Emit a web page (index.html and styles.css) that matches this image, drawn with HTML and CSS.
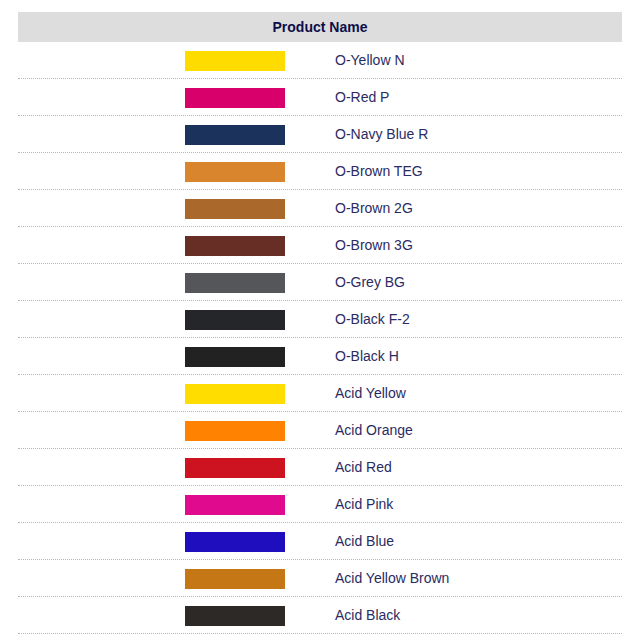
FILE: index.html
```html
<!DOCTYPE html>
<html>
<head>
<meta charset="utf-8">
<link rel="stylesheet" href="styles.css">
</head>
<body>
<div class="wrap">
  <div class="head">Product Name</div>
  <div class="row"><div class="sw-cell"><span class="sw" style="background:#FFDC00"></span></div><div class="name">O-Yellow N</div></div>
  <div class="row"><div class="sw-cell"><span class="sw" style="background:#D8006B"></span></div><div class="name">O-Red P</div></div>
  <div class="row"><div class="sw-cell"><span class="sw" style="background:#1B335C"></span></div><div class="name">O-Navy Blue R</div></div>
  <div class="row"><div class="sw-cell"><span class="sw" style="background:#D9852E"></span></div><div class="name">O-Brown TEG</div></div>
  <div class="row"><div class="sw-cell"><span class="sw" style="background:#AA682A"></span></div><div class="name">O-Brown 2G</div></div>
  <div class="row"><div class="sw-cell"><span class="sw" style="background:#662E24"></span></div><div class="name">O-Brown 3G</div></div>
  <div class="row"><div class="sw-cell"><span class="sw" style="background:#55565A"></span></div><div class="name">O-Grey BG</div></div>
  <div class="row"><div class="sw-cell"><span class="sw" style="background:#25262A"></span></div><div class="name">O-Black F-2</div></div>
  <div class="row"><div class="sw-cell"><span class="sw" style="background:#222222"></span></div><div class="name">O-Black H</div></div>
  <div class="row"><div class="sw-cell"><span class="sw" style="background:#FFDD00"></span></div><div class="name">Acid Yellow</div></div>
  <div class="row"><div class="sw-cell"><span class="sw" style="background:#FF8200"></span></div><div class="name">Acid Orange</div></div>
  <div class="row"><div class="sw-cell"><span class="sw" style="background:#CD1320"></span></div><div class="name">Acid Red</div></div>
  <div class="row"><div class="sw-cell"><span class="sw" style="background:#E00A8F"></span></div><div class="name">Acid Pink</div></div>
  <div class="row"><div class="sw-cell"><span class="sw" style="background:#1E0EBD"></span></div><div class="name">Acid Blue</div></div>
  <div class="row"><div class="sw-cell"><span class="sw" style="background:#C47714"></span></div><div class="name">Acid Yellow Brown</div></div>
  <div class="row"><div class="sw-cell"><span class="sw" style="background:#2D2926"></span></div><div class="name">Acid Black</div></div>
</div>
</body>
</html>
```
FILE: styles.css
```css
html, body {
  margin: 0;
  padding: 0;
  background: #fff;
}
body {
  font-family: "Liberation Sans", Arial, sans-serif;
  font-size: 14px;
  color: #2b2b63;
}
.wrap {
  padding: 12px 17px 0 18px;
}
.head {
  background: #dddddd;
  height: 30px;
  display: flex;
  align-items: center;
  justify-content: center;
  font-weight: bold;
  color: #0d0d4a;
}
.row {
  display: grid;
  grid-template-columns: 302px 1fr;
  height: 36px;
  border-bottom: 1px dotted #b8b8b8;
}
.sw-cell {
  display: flex;
  justify-content: flex-end;
  align-items: flex-start;
  padding: 9px 35px 0 0;
}
.sw {
  display: block;
  width: 100px;
  height: 20px;
}
.name {
  display: flex;
  align-items: center;
  padding-left: 15px;
}
```
